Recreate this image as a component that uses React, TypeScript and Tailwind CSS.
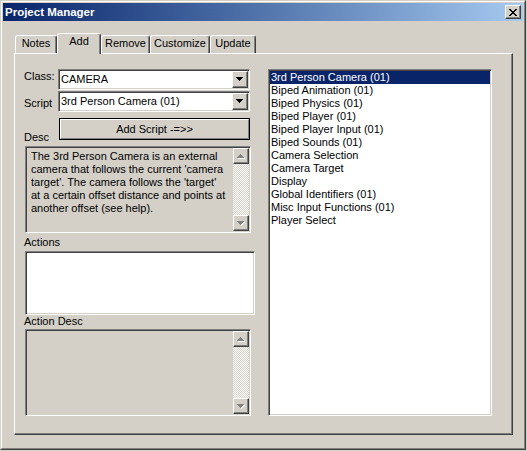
import React from "react";

const RAISED =
  "border border-t-white border-l-white border-r-[#404040] border-b-[#404040] shadow-[inset_-1px_-1px_#808080]";
const SUNKEN =
  "border border-t-[#808080] border-l-[#808080] border-r-white border-b-white shadow-[inset_1px_1px_#404040,inset_-1px_-1px_#d4d0c8]";

const SCRIPTS = [
  "3rd Person Camera (01)",
  "Biped Animation (01)",
  "Biped Physics (01)",
  "Biped Player (01)",
  "Biped Player Input (01)",
  "Biped Sounds (01)",
  "Camera Selection",
  "Camera Target",
  "Display",
  "Global Identifiers (01)",
  "Misc Input Functions (01)",
  "Player Select",
];

const TABS = [
  { label: "Notes", w: "w-[42px]" },
  { label: "Add", w: "w-[44px]", active: true },
  { label: "Remove", w: "w-[49px]" },
  { label: "Customize", w: "w-[60px]" },
  { label: "Update", w: "w-[46px]" },
];

const DOWN = "M0 0h7v1H0z M1 1h5v1H1z M2 2h3v1H2z M3 3h1v1H3z";
const UP = "M3 0h1v1H3z M2 1h3v1H2z M1 2h5v1H1z M0 3h7v1H0z";

function Arrow({ d, disabled }: { d: string; disabled?: boolean }) {
  return (
    <svg width="8" height="5" viewBox="0 0 8 5" shapeRendering="crispEdges">
      {disabled && <path d={d} fill="#ffffff" transform="translate(1 1)" />}
      <path d={d} fill={disabled ? "#808080" : "#000000"} />
    </svg>
  );
}

function Combo({ value }: { value: string }) {
  return (
    <div className={`${SUNKEN} w-[192px] h-[21px] bg-white p-[1px] flex`}>
      <div className="flex-1 pl-[1px] pt-[2px] leading-[13px]">{value}</div>
      <div className={`${RAISED} w-[16px] h-[17px] bg-[#d4d0c8] flex items-center justify-center`}>
        <Arrow d={DOWN} />
      </div>
    </div>
  );
}

function ScrollBox({ children }: { children?: React.ReactNode }) {
  return (
    <div className={`${SUNKEN} ml-[1px] w-[226px] h-[87px] bg-[#d4d0c8] p-[1px] flex`}>
      <div className="flex-1 pl-[4px] pt-[2px] leading-[13px]">{children}</div>
      <div className="w-[16px] flex flex-col">
        <div className={`${RAISED} h-[16px] bg-[#d4d0c8] flex items-center justify-center`}>
          <Arrow d={UP} disabled />
        </div>
        <div className="flex-1 bg-[image:repeating-conic-gradient(#ffffff_0_25%,#d4d0c8_0_50%)] bg-[length:2px_2px]" />
        <div className={`${RAISED} h-[16px] bg-[#d4d0c8] flex items-center justify-center`}>
          <Arrow d={DOWN} disabled />
        </div>
      </div>
    </div>
  );
}

export default function App() {
  return (
    <div className="w-[527px] h-[451px] bg-[#d4d0c8] font-['Liberation_Sans',Arial,sans-serif] text-[11px] text-black">
      <div className="w-[526px] h-[450px] border border-t-[#d4d0c8] border-l-[#d4d0c8] border-r-[#404040] border-b-[#404040]">
        <div className="h-full border border-t-white border-l-white border-r-[#808080] border-b-[#808080] p-[1px] flex flex-col">
          {/* Title bar */}
          <div className="h-[18px] bg-linear-to-r from-[#0a246a] to-[#a6caf0] flex items-center pl-[2px] pr-[2px]">
            <span className="flex-1 text-white font-bold text-[11.5px] leading-[18px]">Project Manager</span>
            <div className={`${RAISED} w-[16px] h-[14px] bg-[#d4d0c8] flex items-center justify-center`}>
              <svg width="8" height="7" viewBox="0 0 8 7" shapeRendering="crispEdges">
                <path
                  d="M0 0h2v1H0z M6 0h2v1H6z M1 1h2v1H1z M5 1h2v1H5z M2 2h4v1H2z M3 3h2v1H3z M2 4h4v1H2z M1 5h2v1H1z M5 5h2v1H5z M0 6h2v1H0z M6 6h2v1H6z"
                  fill="#000"
                />
              </svg>
            </div>
          </div>

          {/* Body */}
          <div className="pl-[11px] pt-[12px]">
            {/* Tabs */}
            <div className="flex items-end h-[20px] pl-[1px]">
              {TABS.map((t) =>
                t.active ? (
                  <div
                    key={t.label}
                    className={`${t.w} h-[21px] -mb-[1px] relative z-10 bg-[#d4d0c8] border-l border-t border-r border-l-white border-t-white border-r-[#404040] shadow-[inset_-1px_0_#808080] rounded-t-[3px] text-center pt-[1px] leading-[13px]`}
                  >
                    {t.label}
                  </div>
                ) : (
                  <div
                    key={t.label}
                    className={`${t.w} h-[18px] bg-[#d4d0c8] border-l border-t border-r border-l-white border-t-white border-r-[#404040] shadow-[inset_-1px_0_#808080] rounded-t-[3px] text-center pt-[1px] leading-[13px]`}
                  >
                    {t.label}
                  </div>
                )
              )}
            </div>

            {/* Panel */}
            <div className={`${RAISED} w-[499px] h-[382px] pl-[9px] pt-[15px] flex`}>
              {/* Left column */}
              <div className="w-[232px] flex flex-col">
                <div className="flex h-[21px]">
                  <span className="w-[34px] pt-[1px] leading-[13px]">Class:</span>
                  <Combo value="CAMERA" />
                </div>
                <div className="flex h-[21px] mt-[1px]">
                  <span className="w-[34px] pt-[6px] leading-[13px]">Script</span>
                  <Combo value="3rd Person Camera (01)" />
                </div>
                <div className="mt-[6px] ml-[35px] w-[191px] h-[22px] border border-black">
                  <div className="h-full border border-t-white border-l-white border-r-[#808080] border-b-[#808080] flex items-center justify-center leading-[13px]">
                    Add Script -=&gt;&gt;
                  </div>
                </div>
                <span className="-mt-[9px] leading-[13px]">Desc</span>
                <div className="mt-[2px]">
                  <ScrollBox>
                    The 3rd Person Camera is an external
                    <br />
                    camera that follows the current 'camera
                    <br />
                    target'. The camera follows the 'target'
                    <br />
                    at a certain offset distance and points at
                    <br />
                    another offset (see help).
                  </ScrollBox>
                </div>
                <span className="mt-[3px] leading-[13px]">Actions</span>
                <div className={`${SUNKEN} mt-[2px] ml-[1px] w-[230px] h-[64px] bg-white`} />
                <span className="leading-[13px]">Action Desc</span>
                <div className="mt-[1px]">
                  <ScrollBox />
                </div>
              </div>

              {/* Script list */}
              <div className={`${SUNKEN} ml-[12px] w-[224px] h-[347px] bg-white p-[1px] flex flex-col`}>
                {SCRIPTS.map((s, i) => (
                  <div
                    key={s}
                    className={`h-[13px] leading-[13px] pl-[1px] ${i === 0 ? "bg-[#0a246a] text-white" : ""}`}
                  >
                    {s}
                  </div>
                ))}
              </div>
            </div>
          </div>
        </div>
      </div>
    </div>
  );
}
